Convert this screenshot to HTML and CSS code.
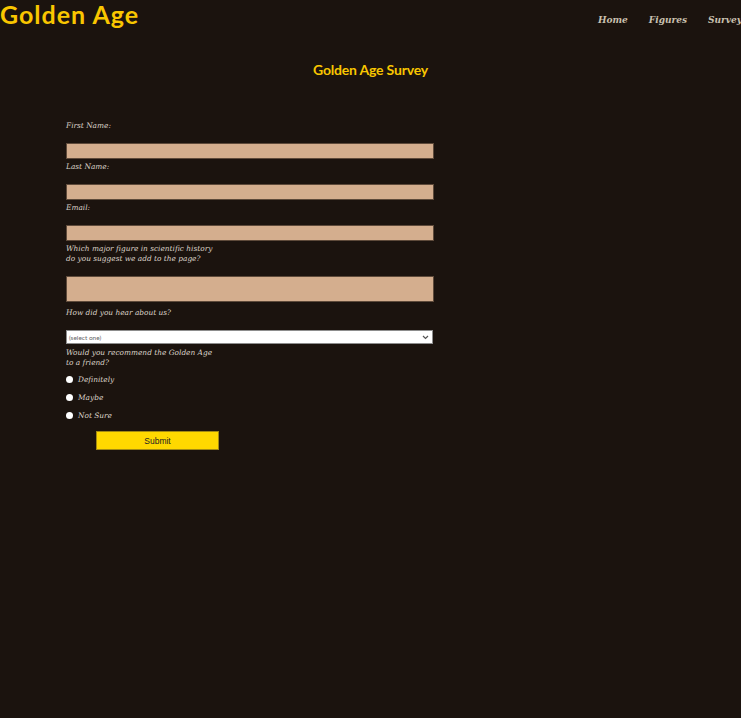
FILE: index.html
```html
<!DOCTYPE html>
<html>
<head>
<meta charset="utf-8">
<link rel="stylesheet" href="styles.css">
</head>
<body>
<header class="top">
  <h1 class="logo">Golden Age</h1>
  <nav class="nav">
    <a class="nav-link" href="#">Home</a>
    <a class="nav-link" href="#">Figures</a>
    <a class="nav-link" href="#">Survey</a>
  </nav>
</header>
<main class="main">
  <h2 class="title">Golden Age Survey</h2>
  <form class="form">
    <label class="lbl">First Name:</label>
    <input class="field" type="text">
    <label class="lbl">Last Name:</label>
    <input class="field" type="text">
    <label class="lbl">Email:</label>
    <input class="field" type="text">
    <label class="lbl">Which major figure in scientific history<br>do you suggest we add to the page?</label>
    <textarea class="field area"></textarea>
    <label class="lbl lbl-gap">How did you hear about us?</label>
    <div class="select">
      <span class="select-text">(select one)</span>
      <svg class="chev" width="7" height="5" viewBox="0 0 7 5"><path d="M1 1 L3.5 3.5 L6 1" fill="none" stroke="#555" stroke-width="1.2"/></svg>
    </div>
    <label class="lbl lbl-tight">Would you recommend the Golden Age<br>to a friend?</label>
    <div class="radios">
      <div class="radio-row"><span class="radio"></span><span class="radio-lbl">Definitely</span></div>
      <div class="radio-row"><span class="radio"></span><span class="radio-lbl">Maybe</span></div>
      <div class="radio-row"><span class="radio"></span><span class="radio-lbl">Not Sure</span></div>
    </div>
    <button class="submit" type="button">Submit</button>
  </form>
</main>
</body>
</html>
```
FILE: styles.css
```css
html, body {
  margin: 0;
  padding: 0;
  background: #1b130e;
  height: 100%;
  overflow: hidden;
}
body {
  font-family: "Liberation Serif", serif;
}
.top {
  display: flex;
  justify-content: space-between;
  height: 40px;
}
.logo {
  margin: 0;
  font-family: "Lato", "Open Sans", sans-serif;
  font-weight: 700;
  font-size: 25px;
  line-height: 28px;
  color: #f9c600;
  letter-spacing: 1px;
}
.nav {
  display: flex;
  gap: 21px;
  padding-top: 13px;
  margin-right: -1px;
}
.nav-link {
  font-family: "DejaVu Serif", serif;
  font-style: italic;
  font-weight: 700;
  font-size: 9px;
  color: #c9c0ae;
  text-decoration: none;
  line-height: 14px;
}
.main {
  display: flex;
  flex-direction: column;
}
.title {
  margin: 21px 0 0 0;
  text-align: center;
  font-family: "Lato", "Open Sans", sans-serif;
  font-weight: 700;
  font-size: 14px;
  line-height: 18px;
  color: #f9c600;
  letter-spacing: -0.2px;
}
.form {
  display: flex;
  flex-direction: column;
  align-items: flex-start;
  padding-left: 66px;
  margin-top: 42px;
}
.lbl {
  display: block;
  font-family: "DejaVu Serif", serif;
  font-style: italic;
  font-size: 7.4px;
  line-height: 10px;
  color: #ddd4ca;
  margin: 3px 0 12px 0;
}
.lbl:first-child {
  margin-top: 0;
}
.lbl-gap {
  margin-top: 6px;
}
.lbl-tight {
  margin-top: 4px;
  margin-bottom: 6px;
}
.field {
  box-sizing: border-box;
  width: 368px;
  height: 16px;
  margin: 0;
  padding: 0;
  background: #d4ae8e;
  border: 1px solid #5e4a3a;
  display: block;
}
.area {
  height: 26px;
  resize: none;
}
.select {
  box-sizing: border-box;
  width: 367px;
  height: 14px;
  background: #fff;
  border: 1px solid #8d8d8d;
  display: flex;
  align-items: center;
  justify-content: space-between;
  padding: 0 3px 0 2px;
}
.select-text {
  font-family: "Lato", sans-serif;
  font-size: 6.5px;
  color: #666;
}
.radios {
  display: flex;
  flex-direction: column;
  gap: 8px;
}
.radio-row {
  display: flex;
  align-items: center;
  gap: 5px;
  height: 10px;
}
.radio {
  width: 7px;
  height: 7px;
  border-radius: 50%;
  background: #fff;
}
.radio-lbl {
  font-family: "DejaVu Serif", serif;
  font-style: italic;
  font-size: 7.4px;
  color: #ddd4ca;
}
.submit {
  margin: 11px 0 0 30px;
  width: 123px;
  height: 19px;
  background: #ffd800;
  border: 1px solid #a38a13;
  font-family: "Liberation Sans", Arial, sans-serif;
  font-size: 8.5px;
  color: #222;
  padding: 0;
}
```
